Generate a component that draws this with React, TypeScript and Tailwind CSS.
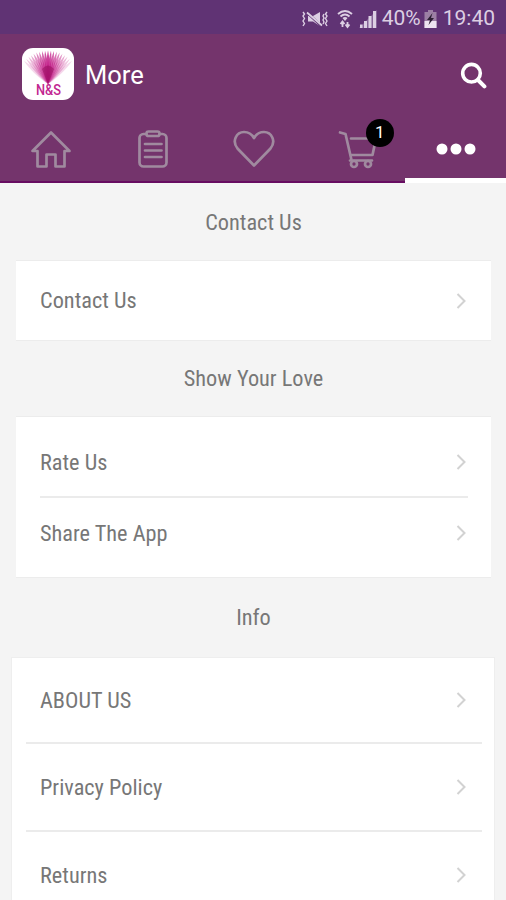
import React from 'react';

const PETALS = [-54, -48, -42, -36, -30, -24, -18, -12, -6, 0, 6, 12, 18, 24, 30, 36, 42, 48, 54];

const App = () => {
  return (
    <div className="h-[900px] w-full overflow-hidden bg-[#f4f4f4] font-[Roboto,sans-serif]">
      <StatusBar />
      <Header />
      <TabBar />
      <main>
        <SectionTitle className="h-[77px] pt-[3px]">Contact Us</SectionTitle>
        <section className="mr-[15px] ml-4 border-y border-[#ececec] bg-white">
          <Row label="Contact Us" className="mx-6 h-[79px]" />
        </section>

        <SectionTitle className="h-[75px] pt-[1px]">Show Your Love</SectionTitle>
        <section className="mr-[15px] ml-4 border-y border-[#ececec] bg-white pt-[11px] pb-[9px]">
          <Row label="Rate Us" className="mx-6 h-[68px]" />
          <div className="mr-[23px] ml-6 h-[2px] bg-[#ebebeb]" />
          <Row label="Share The App" className="mx-6 h-[70px]" />
        </section>

        <SectionTitle className="h-[79px]">Info</SectionTitle>
        <section className="mr-[11px] ml-[11px] border border-[#eeeeee] bg-white">
          <Row label="ABOUT US" className="mr-[27px] ml-7 h-[84px]" />
          <div className="mr-[12px] ml-[14px] h-[2px] bg-[#ebebeb]" />
          <Row label="Privacy Policy" className="mr-[27px] ml-7 h-[86px]" />
          <div className="mr-[12px] ml-[14px] h-[2px] bg-[#ebebeb]" />
          <Row label="Returns" className="mr-[27px] ml-7 h-[86px]" />
        </section>
      </main>
    </div>
  );
};

const StatusBar = () => (
  <div className="flex h-[34px] items-center justify-end bg-[#603374] pt-[3px] pr-[11px] text-[21px] text-[#dccfe3]">
    <MuteIcon />
    <WifiIcon />
    <SignalIcon />
    <span className="ml-1">40%</span>
    <BatteryIcon />
    <span className="ml-[6px]">19:40</span>
  </div>
);

const Header = () => (
  <header className="flex h-[80px] items-center bg-[#74346c] pr-[19px] pl-[22px]">
    <Logo />
    <h1 className="ml-[11px] flex-1 pt-[2px] text-[25.500px] text-white">More</h1>
    <svg className="mt-[2px] h-[27px] w-[27px]" viewBox="0 0 27 27" fill="none" stroke="#fff">
      <circle cx="11.5" cy="11.2" r="8.800" strokeWidth="3.600" />
      <path d="M18 18l6.400 6.400" strokeWidth="4" strokeLinecap="round" />
    </svg>
  </header>
);

const Logo = () => (
  <svg className="h-[52px] w-[52px]" viewBox="0 0 52 52">
    <rect width="52" height="52" rx="11" fill="#fff" />
    {PETALS.map((angle) => (
      <path
        key={angle}
        d="M26 36C24 27 23.800 12 26 2.500C28.200 12 28 27 26 36Z"
        fill="#c01583"
        fillOpacity={0.8 - Math.abs(angle) / 85}
        transform={`rotate(${angle * 0.85} 26 36)`}
      />
    ))}
    <path d="M26 36L20 21Q26 14 32 21Z" fill="#8c0c55" fillOpacity="0.45" />
    <text
      x="26.500"
      y="47"
      textAnchor="middle"
      textLength="25"
      lengthAdjust="spacingAndGlyphs"
      fontSize="14"
      fontWeight="500"
      fill="#c22690"
    >
      N&amp;S
    </text>
  </svg>
);

const TabBar = () => (
  <nav className="grid h-[69px] grid-cols-5 bg-[#74346c]">
    <Tab>
      <svg className="h-[40px] w-[44px]" viewBox="0 0 44 40" {...stroke}>
        <path d="M3.500 22L22 3.500L40.500 22H35.500V37.500H26.500V25.500H17.500V37.500H8.500V22Z" />
      </svg>
    </Tab>
    <Tab>
      <svg className="ml-[2px] h-[40px] w-[32px]" viewBox="0 0 32 40" {...stroke}>
        <rect x="2.500" y="5" width="27" height="32.500" rx="4" />
        <rect x="9.500" y="2.500" width="13" height="4.500" rx="2" fill="#74346c" />
        <path d="M8 15h16.500M8 21.500h16.500M8 28h16.500" />
      </svg>
    </Tab>
    <Tab>
      <svg className="ml-[2px] h-[40px] w-[44px]" viewBox="0 0 44 40" {...stroke}>
        <path d="M22 36.500L5.500 19.500C-.5 12 4.500 3 12 3C17 3 20 5.500 22 9C24 5.500 27 3 32 3C39.500 3 44.500 12 38.500 19.500Z" />
      </svg>
    </Tab>
    <Tab>
      <div className="relative ml-[3px]">
        <svg className="h-[40px] w-[44px]" viewBox="0 0 44 40" {...stroke}>
          <path d="M6 3.500L11.500 5L17.500 31M17 9.500H42L38.500 26H16.500M16 31.500H38" />
          <circle cx="20" cy="35" r="3" />
          <circle cx="34" cy="35" r="3" />
        </svg>
        <span className="absolute -top-[10px] left-[32px] flex h-[28px] w-[28px] items-center justify-center rounded-full bg-black pt-px text-[17px] text-white">
          1
        </span>
      </div>
    </Tab>
    <Tab active>
      <svg className="ml-[2px] h-[12px] w-[40px]" viewBox="0 0 40 12" fill="#fff">
        <circle cx="6" cy="6" r="5.500" />
        <circle cx="20" cy="6" r="5.500" />
        <circle cx="34" cy="6" r="5.500" />
      </svg>
    </Tab>
  </nav>
);

const stroke = {
  fill: 'none',
  stroke: '#a08a9f',
  strokeWidth: 2.7,
  strokeLinecap: 'round',
  strokeLinejoin: 'round',
} as const;

const Tab = ({ active, children }: { active?: boolean; children: React.ReactNode }) => (
  <div
    className={
      active
        ? 'flex items-center justify-center border-b-[5px] border-white pt-[5px]'
        : 'flex items-center justify-center border-b-2 border-[#670d61] pt-[2px]'
    }
  >
    {children}
  </div>
);

const SectionTitle = ({ className, children }: { className: string; children: React.ReactNode }) => (
  <h2 className={`flex items-center justify-center pl-[1px] ${className}`}>
    <Label>{children}</Label>
  </h2>
);

const Label = ({ children }: { children: React.ReactNode }) => (
  <span className="font-['Roboto_Condensed',Roboto,sans-serif] text-[22.300px] text-[#777777] [font-stretch:75%]">
    {children}
  </span>
);

const Row = ({ label, className }: { label: string; className: string }) => (
  <div className={`flex items-center justify-between ${className}`}>
    <span className="pt-px">
      <Label>{label}</Label>
    </span>
    <svg className="h-[18px] w-[12px]" viewBox="0 0 12 18" fill="none" stroke="#d2d2d2" strokeWidth="2">
      <path d="M2.500 2L9.500 9L2.500 16" />
    </svg>
  </div>
);

const MuteIcon = () => (
  <svg className="h-[18px] w-[28px]" viewBox="0 0 28 18" fill="none" stroke="#dccfe3" strokeWidth="1.400">
    <path d="M2 2l1.500 2L2 6l1.500 2.500L2 11l1.500 2.500L2 16M26 2l-1.500 2L26 6l-1.500 2.500L26 11l-1.500 2.500L26 16M23 4l-1 2 1 2-1 2 1 2-1 2" />
    <path d="M7 6h5L19 2v14l-7-4.500H7Z" fill="#dccfe3" stroke="none" />
    <path d="M7 3.500l14 13" stroke="#603374" strokeWidth="2.500" />
    <path d="M6 2.500l15 13" strokeWidth="1.800" />
  </svg>
);

const WifiIcon = () => (
  <svg className="ml-2 h-[20px] w-[16px]" viewBox="0 0 16 20" fill="none" stroke="#dccfe3">
    <path d="M1 5Q8-1 15 5M3.500 7.500Q8 3.500 12.500 7.500" strokeWidth="1.900" />
    <path d="M5.500 9Q8 7 10.500 9L8 12Z" fill="#dccfe3" stroke="none" />
    <path d="M5.500 18v-5M3.500 15l2-2.500 2 2.500M10.500 13v5M8.500 15.500l2 2.500 2-2.500" strokeWidth="1.800" />
  </svg>
);

const SignalIcon = () => (
  <svg className="mr-px ml-[6px] h-[18px] w-[18px]" viewBox="0 0 18 18" fill="#dccfe3">
    <path d="M0 18L18 0V18Z" fillOpacity="0.3" />
    <path d="M1 14.500h2.500V18H1ZM5 11h3v7H5ZM9.500 6h3v12h-3ZM14 1h3v17h-3Z" />
  </svg>
);

const BatteryIcon = () => (
  <svg className="ml-[3px] h-[18px] w-[13px]" viewBox="0 0 13 18">
    <path d="M4 0h5v2h3.500v16H.5V2H4Z" fill="#9c80a4" />
    <path d="M.5 11h12v7H.5Z" fill="#eee4f1" />
    <path d="M8.500 3L3 10h3l-1.500 5L10 8H7Z" fill="#2d2034" />
  </svg>
);

export default App;
